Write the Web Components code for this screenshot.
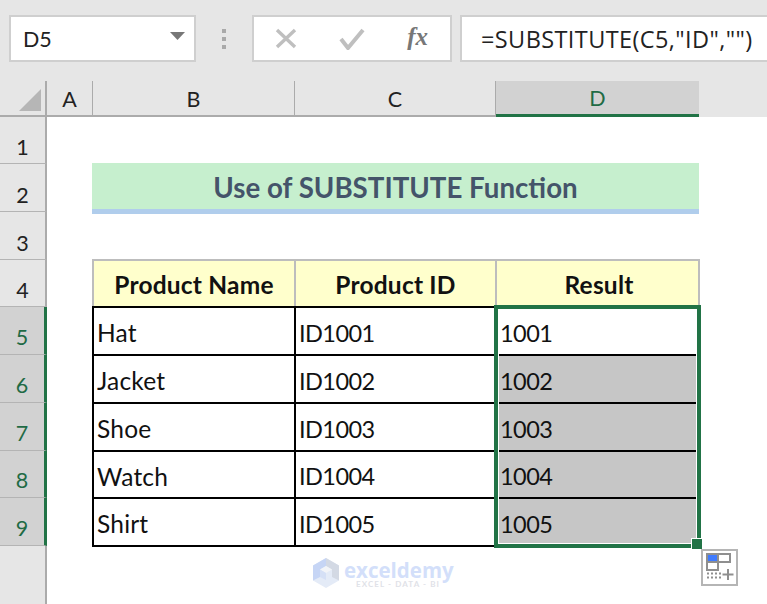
<!DOCTYPE html>
<html lang="en">
<head>
<meta charset="utf-8">
<title>Use of SUBSTITUTE Function</title>
<style>
  html, body { margin: 0; padding: 0; height: 100%; overflow: hidden; background: #e6e6e6; }
  body { font-family: Lato, "Liberation Sans", sans-serif; color: #000; }
</style>
</head>
<body>
<xl-app>
  <xl-toolbar slot="toolbar" name="D5" formula='=SUBSTITUTE(C5,"ID","")'></xl-toolbar>
  <xl-sheet slot="sheet">
    <xl-corner></xl-corner>
    <xl-col-head c="2">A</xl-col-head>
    <xl-col-head c="3">B</xl-col-head>
    <xl-col-head c="4">C</xl-col-head>
    <xl-col-head c="5" selected>D</xl-col-head>

    <xl-row-head r="2">1</xl-row-head>
    <xl-row-head r="3">2</xl-row-head>
    <xl-row-head r="4">3</xl-row-head>
    <xl-row-head r="5">4</xl-row-head>
    <xl-row-head r="6" selected>5</xl-row-head>
    <xl-row-head r="7" selected>6</xl-row-head>
    <xl-row-head r="8" selected>7</xl-row-head>
    <xl-row-head r="9" selected>8</xl-row-head>
    <xl-row-head r="10" selected>9</xl-row-head>
    <xl-row-head r="11"></xl-row-head>

    <xl-title>Use of SUBSTITUTE Function</xl-title>

    <xl-cell r="5" c="3" kind="head">Product Name</xl-cell>
    <xl-cell r="5" c="4" kind="head">Product ID</xl-cell>
    <xl-cell r="5" c="5" kind="head">Result</xl-cell>

    <xl-cell r="6" c="3">Hat</xl-cell>
    <xl-cell r="6" c="4" num>ID1001</xl-cell>
    <xl-cell r="6" c="5" num>1001</xl-cell>
    <xl-cell r="7" c="3">Jacket</xl-cell>
    <xl-cell r="7" c="4" num>ID1002</xl-cell>
    <xl-cell r="7" c="5" kind="filled" num>1002</xl-cell>
    <xl-cell r="8" c="3">Shoe</xl-cell>
    <xl-cell r="8" c="4" num>ID1003</xl-cell>
    <xl-cell r="8" c="5" kind="filled" num>1003</xl-cell>
    <xl-cell r="9" c="3">Watch</xl-cell>
    <xl-cell r="9" c="4" num>ID1004</xl-cell>
    <xl-cell r="9" c="5" kind="filled" num>1004</xl-cell>
    <xl-cell r="10" c="3">Shirt</xl-cell>
    <xl-cell r="10" c="4" num>ID1005</xl-cell>
    <xl-cell r="10" c="5" kind="filled" num>1005</xl-cell>

    <xl-selection></xl-selection>
    <xl-watermark></xl-watermark>
  </xl-sheet>
</xl-app>

<script>
/** Page shell: toolbar on top, sheet filling the rest. */
class XlApp extends HTMLElement {
  constructor() { super(); this.attachShadow({mode: 'open'}); }
  connectedCallback() {
    this.shadowRoot.innerHTML = `
      <style>
        :host { display: flex; flex-direction: column; width: 767px; height: 604px; overflow: hidden; background: #e6e6e6; }
      </style>
      <slot name="toolbar"></slot>
      <slot name="sheet"></slot>
    `;
  }
}

/** Name box, separator dots, formula buttons and formula input. */
class XlToolbar extends HTMLElement {
  constructor() { super(); this.attachShadow({mode: 'open'}); }
  connectedCallback() {
    const name = this.getAttribute('name');
    const formula = this.getAttribute('formula');
    this.shadowRoot.innerHTML = `
      <style>
        :host { display: flex; align-items: stretch; box-sizing: border-box; height: 81px; padding: 15px 0 19px 9px; flex: none;
                font-size: 21.5px; color: #222; }
        .box { box-sizing: border-box; background: #fff; border: 2px solid #cfcfcf; display: flex; align-items: center; }
        #name { width: 187px; padding: 0 9px 0 12px; justify-content: space-between; }
        #name svg { display: block; margin-top: -5px; }
        #dots { width: 56px; display: flex; flex-direction: column; align-items: center; justify-content: center; gap: 4px; }
        #dots i { width: 4px; height: 4px; background: #a9a9a9; display: block; }
        #buttons { width: 200px; justify-content: space-between; padding: 0 22px 0 21px; }
        #fx { font: italic bold 25px "Liberation Serif", serif; color: #777; margin-top: -3px; }
        #formula { flex: 1; margin-left: 8px; padding-left: 19px; border-right: 0; white-space: nowrap;
                   font-family: "Open Sans", sans-serif; font-size: 23.5px; letter-spacing: 0.4px; }
      </style>
      <div class="box" id="name"><span>${name}</span>
        <svg width="15" height="8" viewBox="0 0 15 8"><path d="M0 0h15L7.5 8z" fill="#777"/></svg>
      </div>
      <div id="dots"><i></i><i></i><i></i></div>
      <div class="box" id="buttons">
        <svg width="22" height="22" viewBox="0 0 22 22"><path d="M2 2l18 17M20 2L2 19" stroke="#bfbfbf" stroke-width="3.4" fill="none"/></svg>
        <svg width="26" height="22" viewBox="0 0 26 22"><path d="M2 11l7 9L24 2" stroke="#bfbfbf" stroke-width="4" fill="none"/></svg>
        <span id="fx">fx</span>
      </div>
      <div class="box" id="formula">${formula}</div>
    `;
  }
}

/** The grid of headers and cells; the children are its grid items. */
class XlSheet extends HTMLElement {
  constructor() { super(); this.attachShadow({mode: 'open'}); }
  connectedCallback() {
    this.shadowRoot.innerHTML = `
      <style>
        :host { display: grid; flex: 1; min-height: 0; position: relative;
                grid-template-columns: 47px 46px 202px 201px 203px 1fr;
                grid-template-rows: 36px 47px 48px 48px 47px 48px 48px 48px 47px 48px 1fr; }
        #paper { grid-column: 2 / -1; grid-row: 2 / -1; background: #fff; }
      </style>
      <div id="paper"></div>
      <slot></slot>
    `;
  }
}

class XlCorner extends HTMLElement {
  constructor() { super(); this.attachShadow({mode: 'open'}); }
  connectedCallback() {
    this.shadowRoot.innerHTML = `
      <style>
        :host { grid-column: 1; grid-row: 1; display: block; box-sizing: border-box; border-right: 2px solid #ababab; border-bottom: 2px solid #ababab; }
        svg { display: block; margin: 8px 0 0 19px; }
      </style>
      <svg width="22" height="22" viewBox="0 0 22 22"><path d="M22 0v22H0z" fill="#b6b6b6"/></svg>
    `;
  }
}

class XlColHead extends HTMLElement {
  constructor() { super(); this.attachShadow({mode: 'open'}); }
  connectedCallback() {
    this.style.gridColumn = this.getAttribute('c');
    this.shadowRoot.innerHTML = `
      <style>
        :host { grid-row: 1; display: flex; align-items: center; justify-content: center; box-sizing: border-box;
                font-size: 21.5px; color: #222; border-bottom: 2px solid #ababab; border-right: 1.5px solid #ababab; padding-top: 1px; }
        :host([selected]) { background: #d2d2d2; color: #1f6b45; border-right: 0; border-bottom: 3px solid #217346; }
      </style>
      <slot></slot>
    `;
  }
}

class XlRowHead extends HTMLElement {
  constructor() { super(); this.attachShadow({mode: 'open'}); }
  connectedCallback() {
    this.style.gridRow = this.getAttribute('r');
    this.shadowRoot.innerHTML = `
      <style>
        :host { grid-column: 1; display: flex; align-items: flex-end; justify-content: center; box-sizing: border-box;
                font-size: 21.5px; line-height: 26px; color: #222; padding: 0 0 3px 0; border-right: 2px solid #ababab; border-bottom: 1.5px solid #b4b4b4; }
        :host([selected]) { background: #d2d2d2; color: #1f6b45; border-right: 3px solid #217346; padding-bottom: 4px; }
        :host([r="11"]) { border-bottom: 0; }
      </style>
      <slot></slot>
    `;
  }
}

/** Merged title over columns B to D. */
class XlTitle extends HTMLElement {
  constructor() { super(); this.attachShadow({mode: 'open'}); }
  connectedCallback() {
    this.shadowRoot.innerHTML = `
      <style>
        :host { grid-column: 3 / 6; grid-row: 3; display: flex; align-items: center; justify-content: center; box-sizing: border-box;
                margin: -1px 0 -2px -1px; background: #c6efce; border-bottom: 5px solid #b0cdec;
                font-size: 27.7px; font-weight: 700; color: #44546a; padding-top: 2px; }
      </style>
      <slot></slot>
    `;
  }
}

/** Table cell. Borders overlap the neighbour's by a pixel, like the sheet's shared edges. */
class XlCell extends HTMLElement {
  constructor() { super(); this.attachShadow({mode: 'open'}); }
  connectedCallback() {
    this.style.gridRow = this.getAttribute('r');
    this.style.gridColumn = this.getAttribute('c');
    this.shadowRoot.innerHTML = `
      <style>
        :host { display: flex; align-items: center; box-sizing: border-box; margin: -1px; border: 2px solid #000;
                font-size: 24.5px; letter-spacing: 0.2px; color: #111; padding: 3px 0 0 3px; background: #fff; white-space: nowrap; }
        :host([kind="head"]) { background: #ffffcc; border-color: #bdbdbd; justify-content: center; font-weight: 700; padding: 2px 0 0; }
        :host([kind="filled"]) { background: #c6c6c6; }
        :host([num]) { font-size: 23.5px; letter-spacing: -0.55px; }
        :host([c="5"]) { padding-left: 3px; }
      </style>
      <slot></slot>
    `;
  }
}

/** Green selection frame over D5:D9, with fill handle and paste options button. */
class XlSelection extends HTMLElement {
  constructor() { super(); this.attachShadow({mode: 'open'}); }
  connectedCallback() {
    this.shadowRoot.innerHTML = `
      <style>
        :host { grid-column: 5; grid-row: 6 / 11; display: block; position: relative; box-sizing: border-box;
                margin: -2px -2px -2px -2px; border: 4px solid #217346; box-shadow: inset 0 0 0 1px #fff; }
        #handle { position: absolute; right: -6px; bottom: -6px; width: 10px; height: 10px; background: #217346; border: 1px solid #fff; box-sizing: content-box; }
        #paste { position: absolute; left: 203px; top: 240px; box-sizing: border-box; width: 37px; height: 37px; background: #fff; border: 2px solid #b5b5b5; }
        svg { display: block; margin-top: -1px; }
      </style>
      <div id="handle"></div>
      <div id="paste">
        <svg width="33" height="33" viewBox="0 0 33 33">
          <path d="M4 4h23v8H4z" fill="#fff" stroke="#8f8f8f" stroke-width="2"/>
          <path d="M5 5h10v6H5z" fill="#3f7bff"/>
          <path d="M15 4v8" stroke="#8f8f8f" stroke-width="2"/>
          <path d="M4 12h11v8H4z" fill="#fff" stroke="#8f8f8f" stroke-width="2"/>
          <path d="M4 23.500h14M4 27.500h14" stroke="#8f8f8f" stroke-width="2" stroke-dasharray="2 2" fill="none"/>
          <path d="M25 19v11M19.500 24.500h11" stroke="#8f8f8f" stroke-width="2" fill="none"/>
        </svg>
      </div>
    `;
  }
}

/** Faint site logo over the empty area under the table. */
class XlWatermark extends HTMLElement {
  constructor() { super(); this.attachShadow({mode: 'open'}); }
  connectedCallback() {
    this.shadowRoot.innerHTML = `
      <style>
        :host { position: absolute; left: 312px; top: 476px; display: flex; gap: 4px; align-items: flex-start; pointer-events: none; }
        #words { display: flex; flex-direction: column; align-items: flex-start; }
        #name { font: 700 20.500px/20px "Open Sans", sans-serif; color: #d3dffa; margin-top: 3px; }
        #tag { font: 700 8px/9px Lato, sans-serif; color: #dfe2e8; letter-spacing: 1.100px; margin: 0 0 0 12px; white-space: nowrap; }
      </style>
      <svg width="28" height="32" viewBox="0 0 28 32">
        <path d="M14 1L1 8.500v15L14 31l13-7.500v-15z" fill="#e4ebf7"/>
        <path d="M1 8.500L14 1v8l-6 3.500V20l-7 3.500z" fill="#c6d5f5"/>
        <path d="M14 1l13 7.500v15L20 20v-7.500L14 9z" fill="#d3d9e4"/>
        <path d="M8 12.500L14 9l6 3.500L14 16z" fill="#f2f4f8"/>
        <path d="M14 16v7l-6-3v-7.500z" fill="#d5e0f6"/>
      </svg>
      <div id="words"><span id="name">exceldemy</span><span id="tag">EXCEL - DATA - BI</span></div>
    `;
  }
}

customElements.define('xl-app', XlApp);
customElements.define('xl-toolbar', XlToolbar);
customElements.define('xl-sheet', XlSheet);
customElements.define('xl-corner', XlCorner);
customElements.define('xl-col-head', XlColHead);
customElements.define('xl-row-head', XlRowHead);
customElements.define('xl-title', XlTitle);
customElements.define('xl-cell', XlCell);
customElements.define('xl-selection', XlSelection);
customElements.define('xl-watermark', XlWatermark);
</script>
</body>
</html>
